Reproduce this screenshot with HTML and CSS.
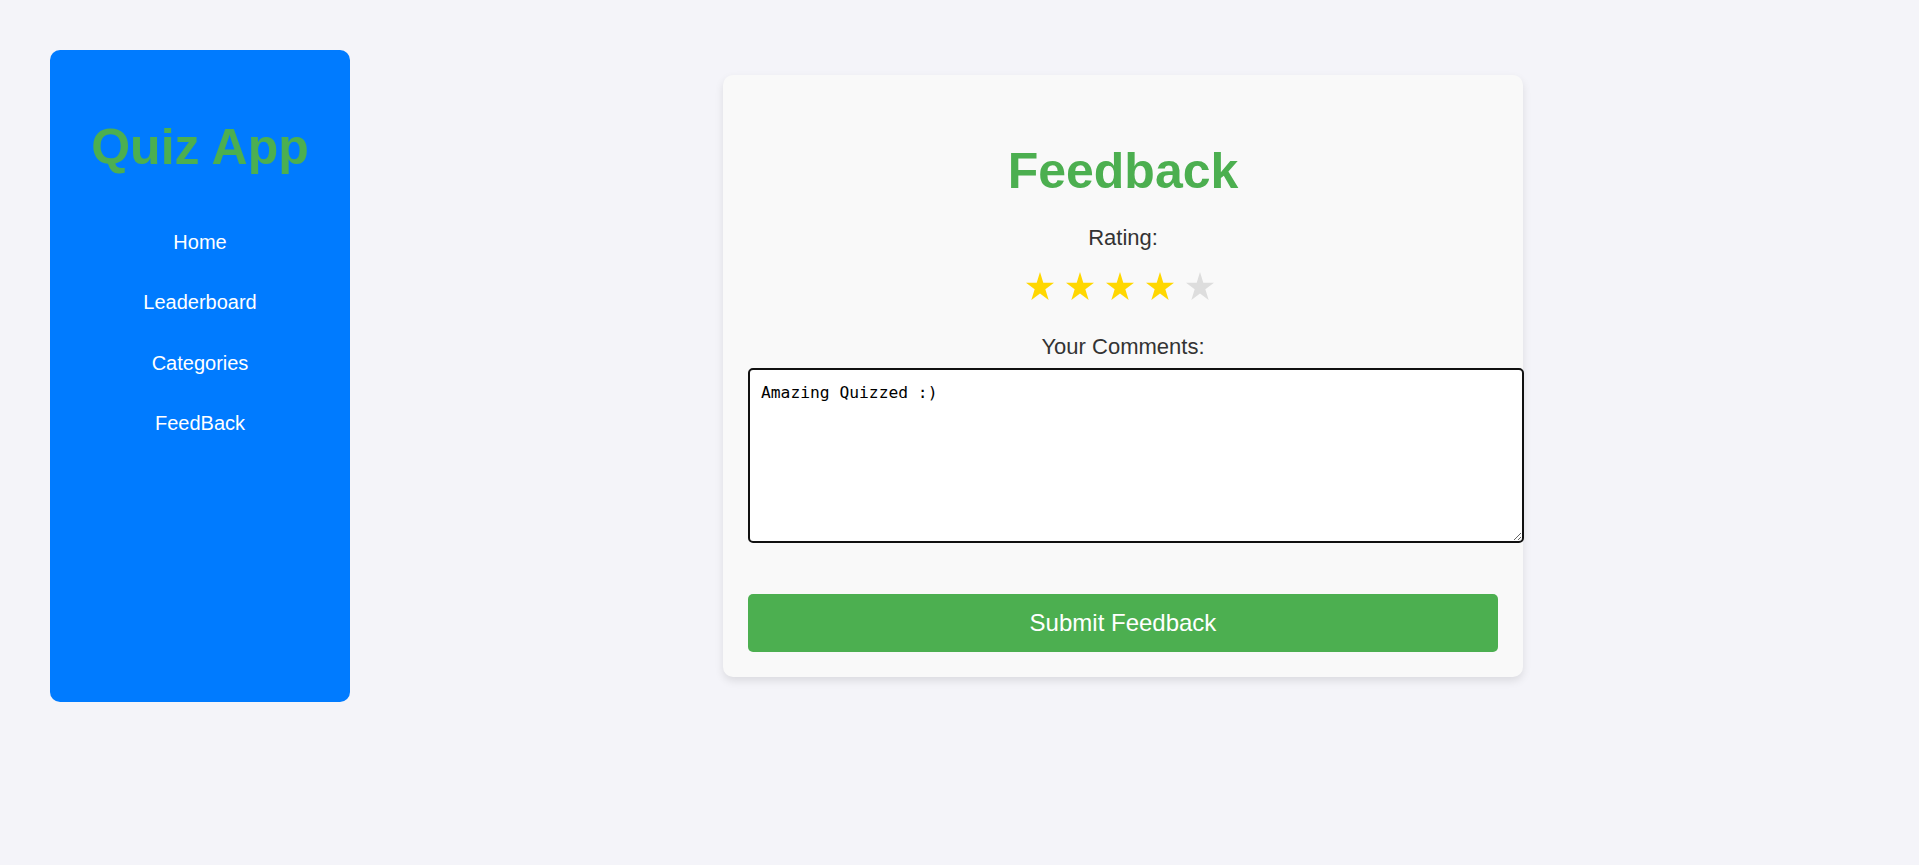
FILE: index.html
```html
<!DOCTYPE html>
<html lang="en">
<head>
<meta charset="utf-8">
<title>Quiz App - Feedback</title>
<link rel="stylesheet" href="styles.css">
</head>
<body>
  <aside class="sidebar">
    <h1 class="brand">Quiz App</h1>
    <nav>
      <ul class="nav">
        <li><a href="#">Home</a></li>
        <li><a href="#">Leaderboard</a></li>
        <li><a href="#">Categories</a></li>
        <li><a href="#">FeedBack</a></li>
      </ul>
    </nav>
  </aside>
  <main class="main">
    <section class="card">
      <h1 class="card-title">Feedback</h1>
      <form class="feedback-form" onsubmit="return false">
        <label class="field-label">Rating:</label>
        <div class="stars">
          <svg class="star star-on" viewBox="2.45 0 95.1 90.45" preserveAspectRatio="none"><polygon points="50,0 61.23,34.55 97.55,34.55 68.16,55.9 79.39,90.45 50,69.1 20.61,90.45 31.84,55.9 2.45,34.55 38.77,34.55"/></svg>
          <svg class="star star-on" viewBox="2.45 0 95.1 90.45" preserveAspectRatio="none"><polygon points="50,0 61.23,34.55 97.55,34.55 68.16,55.9 79.39,90.45 50,69.1 20.61,90.45 31.84,55.9 2.45,34.55 38.77,34.55"/></svg>
          <svg class="star star-on" viewBox="2.45 0 95.1 90.45" preserveAspectRatio="none"><polygon points="50,0 61.23,34.55 97.55,34.55 68.16,55.9 79.39,90.45 50,69.1 20.61,90.45 31.84,55.9 2.45,34.55 38.77,34.55"/></svg>
          <svg class="star star-on" viewBox="2.45 0 95.1 90.45" preserveAspectRatio="none"><polygon points="50,0 61.23,34.55 97.55,34.55 68.16,55.9 79.39,90.45 50,69.1 20.61,90.45 31.84,55.9 2.45,34.55 38.77,34.55"/></svg>
          <svg class="star star-off" viewBox="2.45 0 95.1 90.45" preserveAspectRatio="none"><polygon points="50,0 61.23,34.55 97.55,34.55 68.16,55.9 79.39,90.45 50,69.1 20.61,90.45 31.84,55.9 2.45,34.55 38.77,34.55"/></svg>
        </div>
        <label class="field-label" for="comments">Your Comments:</label>
        <textarea id="comments" class="comments">Amazing Quizzed :)</textarea>
        <button type="submit" class="submit">Submit Feedback</button>
      </form>
    </section>
  </main>
</body>
</html>
```
FILE: styles.css
```css
body {
  margin: 0;
  padding: 50px;
  background: #f4f4f9;
  font-family: "Liberation Sans", Arial, sans-serif;
  display: flex;
  align-items: flex-start;
}

.sidebar {
  width: 300px;
  height: 652px;
  flex-shrink: 0;
  box-sizing: border-box;
  padding-top: 68px;
  background: #007bff;
  border-radius: 10px;
  text-align: center;
}

.brand {
  margin: 0;
  font-size: 50px;
  line-height: 58px;
  font-weight: bold;
  color: #4caf50;
}

.nav {
  list-style: none;
  margin: 36px 0 0;
  padding: 0;
}

.nav a {
  display: block;
  padding: 18px 0;
  font-size: 20px;
  line-height: 24.33px;
  color: #fff;
  text-decoration: none;
}

.main {
  flex: 1;
  padding-top: 25px;
  padding-left: 373px;
}

.card {
  width: 800px;
  box-sizing: border-box;
  padding: 25px;
  background: #f9f9f9;
  border-radius: 10px;
  box-shadow: 0 4px 8px rgba(0, 0, 0, 0.1);
  text-align: center;
}

.card-title {
  margin: 42px 0 25px;
  font-size: 50px;
  line-height: 58px;
  font-weight: bold;
  color: #4caf50;
}

.field-label {
  display: block;
  font-size: 22px;
  line-height: 26px;
  color: #333;
}

.stars {
  display: flex;
  justify-content: center;
  gap: 12px;
  height: 28px;
  margin: 21px 0 34px;
  padding-right: 6px;
}

.star {
  width: 28px;
  height: 28px;
  display: block;
}

.star-on { fill: #ffd700; }
.star-off { fill: #dddddd; }

.comments {
  display: block;
  box-sizing: content-box;
  width: 100%;
  height: 147px;
  margin: 8px 0 0;
  padding: 13px 11px 11px;
  border: 2px solid #111;
  border-radius: 5px;
  background: #fff;
  color: #000;
  font-family: "DejaVu Sans Mono", monospace;
  font-size: 16.3px;
  text-align: left;
  outline: none;
}

.submit {
  display: block;
  width: 100%;
  height: 58px;
  margin-top: 51px;
  padding: 0;
  border: none;
  border-radius: 5px;
  background: #4caf50;
  color: #fff;
  font-family: "Liberation Sans", Arial, sans-serif;
  font-size: 24px;
  line-height: 58px;
  cursor: pointer;
}
```
